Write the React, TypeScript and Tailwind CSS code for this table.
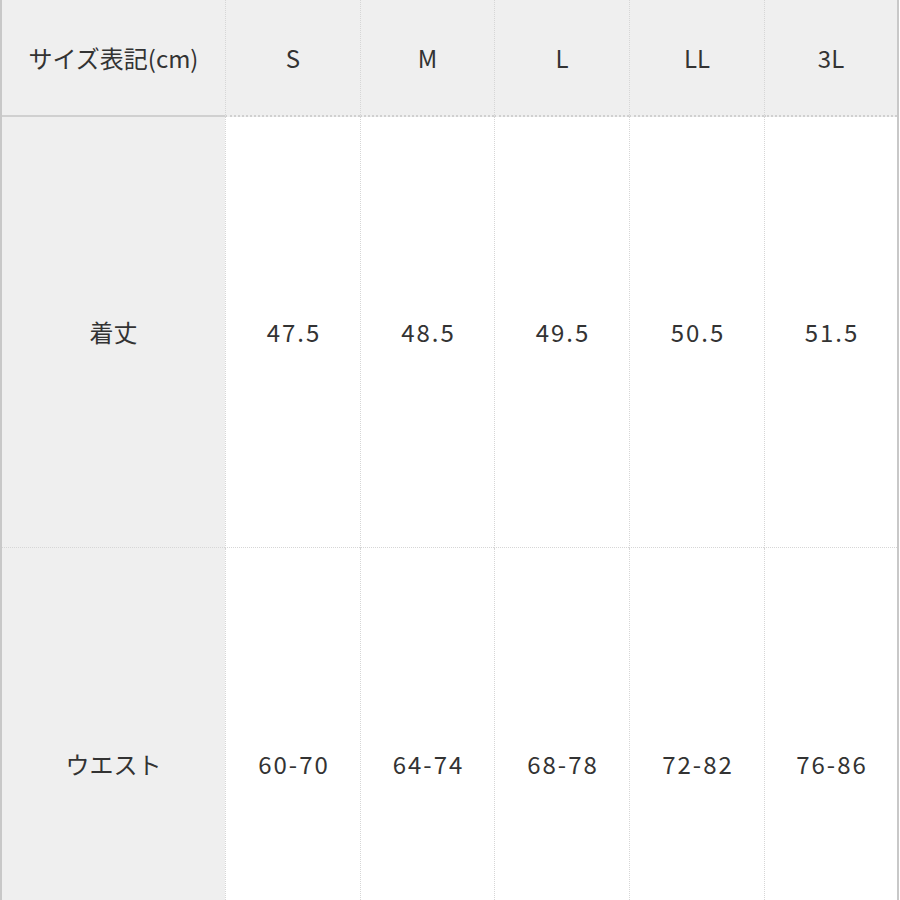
import React from "react";

const sizes = ["S", "M", "L", "LL", "3L"];
const rows = [
  { label: "着丈", values: ["47.5", "48.5", "49.5", "50.5", "51.5"], h: "h-[431px]" },
  { label: "ウエスト", values: ["60-70", "64-74", "68-78", "72-82", "76-86"], h: "h-[432px]" },
];

export default function App() {
  return (
    <div className="w-[900px] h-[900px] overflow-hidden bg-white">
      <div
        className="w-[899px] border-l-2 border-r-2 border-[#c8c8c8] grid grid-cols-[223px_135px_134px_135px_135px_133px] text-[24px] text-[#333333]"
        style={{ fontFamily: '"Noto Sans CJK JP", "Noto Sans", sans-serif' }}
      >
        <div className="h-[117px] bg-[#efefef] border-b-2 border-[#d0d0d0] flex items-center justify-center">
          サイズ表記(cm)
        </div>
        {sizes.map((s) => (
          <div
            key={s}
            className="h-[117px] bg-[#efefef] border-b-2 border-[#d0d0d0] border-l border-l-[#d6d6d6] border-dotted flex items-center justify-center"
          >
            {s}
          </div>
        ))}
        {rows.map((r, ri) => (
          <React.Fragment key={r.label}>
            <div
              className={`${r.h} bg-[#efefef] flex items-center justify-center ${ri === 0 ? "border-b border-dotted border-[#d6d6d6]" : ""}`}
            >
              {r.label}
            </div>
            {r.values.map((v) => (
              <div
                key={v}
                className={`${r.h} bg-white border-l border-dotted border-[#d6d6d6] flex items-center justify-center tracking-[2px] pl-[2px] ${ri === 0 ? "border-b" : ""}`}
              >
                {v}
              </div>
            ))}
          </React.Fragment>
        ))}
      </div>
    </div>
  );
}
